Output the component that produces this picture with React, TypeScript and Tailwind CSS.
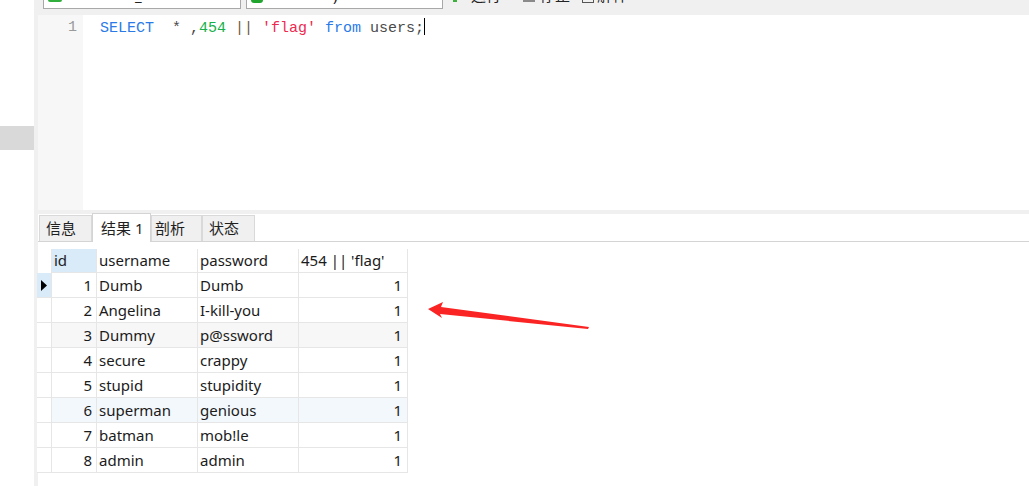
import React from 'react';

type Row = { id: number; username: string; password: string; bg: string; current?: boolean };

const rows: Row[] = [
  { id: 1, username: 'Dumb', password: 'Dumb', bg: 'bg-white', current: true },
  { id: 2, username: 'Angelina', password: 'I-kill-you', bg: 'bg-white' },
  { id: 3, username: 'Dummy', password: 'p@ssword', bg: 'bg-[#f7f7f7]' },
  { id: 4, username: 'secure', password: 'crappy', bg: 'bg-white' },
  { id: 5, username: 'stupid', password: 'stupidity', bg: 'bg-white' },
  { id: 6, username: 'superman', password: 'genious', bg: 'bg-[#f3f8fd]' },
  { id: 7, username: 'batman', password: 'mob!le', bg: 'bg-white' },
  { id: 8, username: 'admin', password: 'admin', bg: 'bg-white' },
];

const sans = 'font-["Noto_Sans","Noto_Sans_CJK_SC",sans-serif]';

const Toolbar = () => (
  <div className="h-[15px] flex items-start overflow-hidden bg-[#f0f0f0] text-[15px] leading-[15px] text-[#222]">
    {/* connection combo */}
    <div className="ml-[9px] w-[198px] h-[9px] bg-white border border-t-0 border-[#a8a8a8] flex">
      <div className="ml-[4px] w-[14px] h-[2px] bg-[#2fae3c] rounded-b-sm" />
      <span className="ml-[73px] -mt-[12px]">_</span>
    </div>
    {/* database combo */}
    <div className="ml-[5px] w-[197px] h-[9px] bg-white border border-t-0 border-[#a8a8a8] flex">
      <div className="ml-[4px] w-[12px] h-[3px] bg-[#22a52f] rounded-b-full" />
      <span className="ml-[70px] -mt-[12px]">)</span>
    </div>
    <div className="ml-[10px] w-[4px] h-[2px] bg-[#3cae3c]" />
    <span className="ml-[14px] -mt-[12px]">运行</span>
    <div className="ml-[22px] w-[12px] h-[2px] bg-[#8a8a8a]" />
    <span className="ml-[5px] -mt-[12px]">停止</span>
    <div className="ml-[12px] w-[12px] h-[3px] border border-t-0 border-[#555]" />
    <span className="ml-[3px] -mt-[12px]">解释</span>
  </div>
);

const Editor = () => (
  <div className="h-[195px] flex bg-white">
    <div className="w-[45px] bg-[#f7f7f7] pt-[3px] pr-[6px] text-right font-['Liberation_Mono',monospace] text-[15px] leading-[20px] text-[#9a9a9a]">
      1
    </div>
    <div className="flex-1 pt-[3px] pl-[17px] font-['Liberation_Mono',monospace] text-[15px] leading-[20px] whitespace-pre text-[#4a4a4a]">
      <span className="text-[#2a7ae8]">SELECT</span>
      <span>{'  * ,'}</span>
      <span className="text-[#18b04a]">454</span>
      <span className="text-[#6b5a3a]">{' || '}</span>
      <span className="text-[#ee2a4f]">'flag'</span>
      <span> </span>
      <span className="text-[#2a7ae8]">from</span>
      <span> users;</span>
      <span className="inline-block w-px h-[17px] bg-black align-[-3px]" />
    </div>
  </div>
);

const tabs = [
  { label: '信息', w: 'w-[53px]', pl: 'pl-[6px]' },
  { label: '结果 1', w: 'w-[59px]', pl: 'pl-[8px]', active: true },
  { label: '剖析', w: 'w-[51px]', pl: 'pl-[3px]' },
  { label: '状态', w: 'w-[53px]', pl: 'pl-[6px]' },
];

const Tabs = () => (
  <div className="h-[28px] flex items-end pl-[1px] border-b border-[#d4d4d4]">
    {tabs.map((t) =>
      t.active ? (
        <div
          key={t.label}
          className={`${t.w} ${t.pl} h-[29px] -mb-px flex items-center bg-white border border-b-0 border-[#d4d4d4] text-[15px] text-[#1f1f1f]`}
        >
          {t.label}
        </div>
      ) : (
        <div
          key={t.label}
          className={`${t.w} ${t.pl} h-[26px] flex items-center bg-[#f0f0f0] border border-b-0 border-[#d9d9d9] text-[15px] text-[#1f1f1f]`}
        >
          {t.label}
        </div>
      )
    )}
  </div>
);

const cell = 'border-r border-b border-[#e6e6e6] flex items-center';

const Grid = () => (
  <div className="mt-[7px] -ml-px text-[15px] text-[#1b1b1b]">
    <div className="flex w-fit h-[24px]">
      <div className="w-[15px] border-r border-[#e6e6e6]" />
      <div className={`${cell} w-[45px] pl-[2px] bg-[#d9eaf8]`}>id</div>
      <div className={`${cell} w-[101px] pl-[2px]`}>username</div>
      <div className={`${cell} w-[101px] pl-[2px]`}>password</div>
      <div className={`${cell} w-[109px] pl-[2px]`}>454 || 'flag'</div>
    </div>
    {rows.map((r) => (
      <div key={r.id} className={`flex w-fit h-[25px] ${r.bg}`}>
        <div className={`${cell} w-[15px] justify-center ${r.current ? 'bg-[#d9eaf8]' : 'bg-white'}`}>
          {r.current && (
            <svg width="7" height="11" viewBox="0 0 7 11">
              <polygon points="0,0 6,5.5 0,11" fill="#000" />
            </svg>
          )}
        </div>
        <div className={`${cell} w-[45px] justify-end pr-[4px]`}>{r.id}</div>
        <div className={`${cell} w-[101px] pl-[2px]`}>{r.username}</div>
        <div className={`${cell} w-[101px] pl-[2px]`}>{r.password}</div>
        <div className={`${cell} w-[109px] justify-end pr-[5px]`}>1</div>
      </div>
    ))}
  </div>
);

export default function App() {
  return (
    <div className={`relative w-[1029px] h-[486px] overflow-hidden bg-white flex ${sans}`}>
      <div className="w-[34px] shrink-0 bg-white">
        <div className="mt-[126px] h-[24px] bg-[#d9d9d9]" />
      </div>
      <div className="flex-1 flex flex-col bg-[#f0f0f0]">
        <Toolbar />
        <div className="flex-1 flex">
          <div className="w-[4px] shrink-0" />
          <div className="flex-1 flex flex-col">
            <Editor />
            <div className="h-[4px]" />
            <div className="flex-1 bg-white">
              <Tabs />
              <Grid />
            </div>
          </div>
        </div>
      </div>
      {/* red annotation arrow */}
      <svg className="absolute left-0 top-0 pointer-events-none" width="1029" height="486">
        <polygon
          points="428,309 443,302 441,307 589,327 588,329 440,314 442,318"
          fill="#fb2424"
        />
      </svg>
    </div>
  );
}
